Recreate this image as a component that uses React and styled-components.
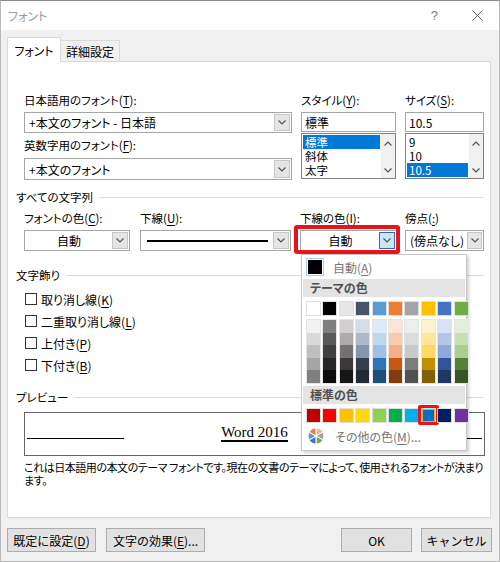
import styled, { createGlobalStyle } from "styled-components";

const GlobalStyle = createGlobalStyle`
  html, body {
    margin: 0;
    padding: 0;
    background: #fff;
  }
  body {
    font-family: "Noto Sans CJK JP", "Noto Sans", sans-serif;
    font-size: 11.5px;
    font-feature-settings: "palt";
    color: #000;
  }
  u {
    text-underline-offset: 2px;
  }
`;

const Window = styled.div`
  width: 500px;
  height: 562px;
  box-sizing: border-box;
  border: 1px solid #b9b9b9;
  border-top-color: #8c8c8c;
  background: #f0f0f0;
  display: flex;
  flex-direction: column;
  overflow: hidden;
`;

const TitleBar = styled.div`
  height: 29px;
  flex: none;
  background: #fff;
  display: flex;
  align-items: center;
  padding: 0 16px 0 7px;
  color: #9b9b9b;
  font-size: 12px;
`;

const TitleActions = styled.div`
  margin-left: auto;
  display: flex;
  align-items: center;
  gap: 34px;
  color: #777;
  font-family: "Liberation Sans", sans-serif;
  font-size: 13px;
`;

const Body = styled.div`
  flex: 1;
  padding: 0 7px 0 6px;
  display: flex;
  flex-direction: column;
`;

const TabStrip = styled.div`
  height: 32px;
  margin-bottom: -1px;
  display: flex;
  align-items: flex-end;
  position: relative;
  z-index: 1;
`;

const Tab = styled.div`
  box-sizing: border-box;
  width: ${(p) => (p.$active ? 54 : 60)}px;
  height: ${(p) => (p.$active ? 25 : 21)}px;
  margin-bottom: ${(p) => (p.$active ? 0 : 1)}px;
  margin-left: ${(p) => (p.$active ? 0 : -1)}px;
  display: flex;
  align-items: center;
  justify-content: center;
  border: 1px solid #d9d9d9;
  border-bottom: none;
  background: ${(p) => (p.$active ? "#fff" : "#f0f0f0")};
  font-size: 12px;
`;

const Panel = styled.div`
  box-sizing: border-box;
  width: 484px;
  height: 457px;
  background: #fff;
  border: 1px solid #d9d9d9;
  padding: 31px 6px 0 16px;
`;

const TopRow = styled.div`
  display: grid;
  grid-template-columns: 268px 95px 79px;
  column-gap: 9px;
`;

const Column = styled.div`
  display: flex;
  flex-direction: column;
`;

const Label = styled.div`
  height: 14px;
  line-height: 14px;
  white-space: nowrap;
  margin-top: ${(p) => p.$mt || 0}px;
  margin-bottom: ${(p) => (p.$mb === undefined ? 5 : p.$mb)}px;
`;

const Combo = styled.div`
  position: relative;
  box-sizing: border-box;
  height: ${(p) => p.$h || 21}px;
  border: 1px solid #a6a6a6;
  background: #fff;
  padding: 1px;
  display: flex;
`;

const ComboText = styled.div`
  flex: 1;
  display: flex;
  align-items: center;
  justify-content: ${(p) => (p.$center ? "center" : "flex-start")};
  padding: 0 ${(p) => p.$pad ?? 3}px;
  white-space: nowrap;
  font-size: 12px;
`;

const DropButton = styled.div`
  width: 16px;
  box-sizing: border-box;
  display: flex;
  align-items: center;
  justify-content: center;
  background: ${(p) => (p.$hot ? "#cce4f7" : "#e5e5e5")};
  border: 1px solid ${(p) => (p.$hot ? "#2f6ea8" : "#c6c6c6")};
`;

const UnderlineSample = styled.div`
  flex: 1;
  height: 2px;
  background: #000;
`;

const TextBox = styled.div`
  box-sizing: border-box;
  height: 20px;
  border: 1px solid #a6a6a6;
  display: flex;
  align-items: center;
  padding-left: 3px;
  font-size: 12px;
`;

const ListBox = styled.div`
  box-sizing: border-box;
  height: 46px;
  margin-top: 1px;
  border: 1px solid #828282;
  display: flex;
`;

const ListItems = styled.div`
  flex: 1;
  padding: 1px;
`;

const ListItem = styled.div`
  height: 14px;
  line-height: 14px;
  padding-left: 2px;
  font-size: 11.5px;
  background: ${(p) => (p.$sel ? "#0078d7" : "transparent")};
  color: ${(p) => (p.$sel ? "#fff" : "#000")};
`;

const ScrollBar = styled.div`
  width: 14px;
  background: #f0f0f0;
  display: flex;
  flex-direction: column;
  justify-content: space-between;
  align-items: center;
  padding: 7px 0 5px;
`;

const GroupTitle = styled.div`
  height: 14px;
  line-height: 14px;
  margin: ${(p) => p.$mt || 0}px 0 0 -8px;
  display: flex;
  align-items: center;
  white-space: nowrap;
  &::after {
    content: "";
    flex: 1;
    height: 1px;
    margin-left: 6px;
    background: #dcdcdc;
  }
`;

const FieldRow = styled.div`
  display: flex;
  margin-top: 7px;
`;

const Field = styled.div`
  width: ${(p) => p.$w}px;
  margin-left: ${(p) => p.$ml || 0}px;
  display: flex;
  flex-direction: column;
  position: relative;
`;

const Highlight = styled.span`
  position: absolute;
  top: -6px;
  left: -7px;
  right: -4px;
  bottom: -4px;
  border: 4px solid #e8141b;
  border-radius: 3px;
  pointer-events: none;
`;

const CheckList = styled.div`
  margin-top: 6px;
  display: flex;
  flex-direction: column;
`;

const CheckRow = styled.div`
  height: 22px;
  display: flex;
  align-items: center;
  padding-left: 1px;
  gap: 4px;
  font-size: 12px;
`;

const CheckBox = styled.span`
  width: 12px;
  height: 12px;
  box-sizing: border-box;
  border: 1px solid #333;
  background: #fff;
`;

const PreviewBox = styled.div`
  box-sizing: border-box;
  margin: 8px -1px 0 0;
  height: 44px;
  border: 1px solid #666;
  display: flex;
  justify-content: space-between;
  align-items: flex-end;
  padding: 0 2px 16px;
`;

const PreviewRule = styled.div`
  width: 97px;
  height: 1px;
  background: #000;
`;

const PreviewText = styled.span`
  font-family: "Liberation Serif", serif;
  font-size: 15px;
  line-height: 15px;
  border-bottom: 2px solid #000;
  margin-bottom: -3px;
`;

const Description = styled.p`
  margin: 5px 0 0;
  line-height: 13px;
  font-size: 11px;
  letter-spacing: -0.45px;
  white-space: nowrap;
`;

const Footer = styled.div`
  display: flex;
  padding-top: 10px;
`;

const Button = styled.button`
  box-sizing: border-box;
  width: ${(p) => p.$w}px;
  height: 24px;
  margin-left: ${(p) => p.$ml || 0};
  padding: 0;
  border: 1px solid #adadad;
  background: #e1e1e1;
  font-family: inherit;
  font-size: 12px;
  color: #000;
`;

/* colour drop-down */

const Popup = styled.div`
  position: absolute;
  left: 0;
  top: 23px;
  width: 166px;
  box-sizing: border-box;
  background: #fff;
  border: 1px solid #c8c8c8;
  box-shadow: 2px 2px 3px rgba(0, 0, 0, 0.18);
  padding: 0 1px 2px;
  z-index: 5;
`;

const MenuRow = styled.div`
  height: 24px;
  margin-top: ${(p) => p.$mt || 0}px;
  display: flex;
  align-items: center;
  padding-left: 5px;
  color: #777;
  font-size: 12px;
  gap: 11px;
`;

const AutoSwatch = styled.span`
  width: 14px;
  height: 14px;
  background: #000;
  box-shadow: 0 0 0 1px #fff, 0 0 0 2px #a9cdee;
`;

const MenuHeader = styled.div`
  height: 18px;
  line-height: 18px;
  margin-top: ${(p) => p.$mt || 0}px;
  padding-left: 7px;
  background: #e4e4e4;
  color: #505050;
  font-weight: bold;
  font-size: 12px;
`;

const SwatchGrid = styled.div`
  display: grid;
  grid-template-columns: repeat(10, 13px);
  column-gap: 3.4px;
  padding-left: 4px;
  margin-top: 5px;
`;

const Swatch = styled.span`
  position: relative;
  width: 13px;
  height: 13px;
  box-sizing: border-box;
  background: ${(p) => p.$c};
  box-shadow: 0 0 0 1px #dedede;
  border: ${(p) => (p.$picked ? "1px solid #f2a33a" : "none")};
`;

const ShadeColumn = styled.div`
  height: 63px;
  display: flex;
  flex-direction: column;
  box-shadow: 0 0 0 1px #e4e4e4;
`;

const Shade = styled.span`
  flex: 1;
  background: ${(p) => p.$c};
`;

const PickMark = styled.span`
  position: absolute;
  top: -5px;
  left: -5px;
  right: -5px;
  bottom: -4px;
  border: 3px solid #e8141b;
  border-radius: 2px;
`;

const theme = [
  ["#ffffff", ["#f2f2f2", "#d9d9d9", "#bfbfbf", "#a6a6a6", "#808080"]],
  ["#000000", ["#7f7f7f", "#595959", "#404040", "#262626", "#0d0d0d"]],
  ["#e7e6e6", ["#d0cece", "#aeaaaa", "#757171", "#3a3838", "#171616"]],
  ["#44546a", ["#d6dce4", "#adb9ca", "#8497b0", "#333f4f", "#222b35"]],
  ["#5b9bd5", ["#ddebf7", "#bdd7ee", "#9bc2e6", "#2f75b5", "#1f4e78"]],
  ["#ed7d31", ["#fce4d6", "#f8cbad", "#f4b084", "#c65911", "#833c0c"]],
  ["#a5a5a5", ["#ededed", "#dbdbdb", "#c9c9c9", "#7b7b7b", "#525252"]],
  ["#ffc000", ["#fff2cc", "#ffe699", "#ffd966", "#bf8f00", "#806000"]],
  ["#4472c4", ["#d9e1f2", "#b4c6e7", "#8ea9db", "#305496", "#203764"]],
  ["#70ad47", ["#e2efda", "#c6e0b4", "#a9d08e", "#548235", "#375623"]],
];

const standard = [
  "#c00000", "#ff0000", "#ffc000", "#ffd800", "#92d050",
  "#00b050", "#00b0f0", "#0070c0", "#002060", "#7030a0",
];

function Chevron({ up }) {
  return (
    <svg width="8" height="5" viewBox="0 0 8 5">
      <polyline
        points={up ? "0.5,4.5 4,1 7.5,4.5" : "0.5,0.5 4,4 7.5,0.5"}
        fill="none"
        stroke="#555"
        strokeWidth="1.2"
      />
    </svg>
  );
}

function ColorWheel() {
  const colors = ["#f4b183", "#a5a5a5", "#70ad47", "#4472c4", "#5b9bd5", "#e8823c"];
  const r = 8;
  const slices = colors.map((c, i) => {
    const a0 = ((i * 60 - 90) * Math.PI) / 180;
    const a1 = (((i + 1) * 60 - 90) * Math.PI) / 180;
    const x0 = 8 + r * Math.cos(a0);
    const y0 = 8 + r * Math.sin(a0);
    const x1 = 8 + r * Math.cos(a1);
    const y1 = 8 + r * Math.sin(a1);
    return (
      <path
        key={c}
        d={`M8 8 L${x0.toFixed(2)} ${y0.toFixed(2)} A${r} ${r} 0 0 1 ${x1.toFixed(2)} ${y1.toFixed(2)} Z`}
        fill={c}
        stroke="#fff"
        strokeWidth="1"
      />
    );
  });
  return (
    <svg width="16" height="16" viewBox="0 0 16 16">
      {slices}
    </svg>
  );
}

function CloseIcon() {
  return (
    <svg width="11" height="11" viewBox="0 0 11 11">
      <path d="M0.5 0.5 L10.5 10.5 M10.5 0.5 L0.5 10.5" stroke="#666" strokeWidth="1" />
    </svg>
  );
}

function ColorMenu() {
  return (
    <Popup>
      <MenuRow>
        <AutoSwatch />
        <span>
          自動(<u>A</u>)
        </span>
      </MenuRow>
      <MenuHeader>テーマの色</MenuHeader>
      <SwatchGrid>
        {theme.map(([c]) => (
          <Swatch key={c} $c={c} />
        ))}
      </SwatchGrid>
      <SwatchGrid>
        {theme.map(([c, shades]) => (
          <ShadeColumn key={c}>
            {shades.map((s) => (
              <Shade key={s} $c={s} />
            ))}
          </ShadeColumn>
        ))}
      </SwatchGrid>
      <MenuHeader $mt={3}>標準の色</MenuHeader>
      <SwatchGrid>
        {standard.map((c) => (
          <Swatch key={c} $c={c} $picked={c === "#0070c0"}>
            {c === "#0070c0" && <PickMark />}
          </Swatch>
        ))}
      </SwatchGrid>
      <MenuRow $mt={2}>
        <ColorWheel />
        <span>
          その他の色(<u>M</u>)...
        </span>
      </MenuRow>
    </Popup>
  );
}

export default function App() {
  return (
    <>
      <GlobalStyle />
      <Window>
        <TitleBar>
          フォント
          <TitleActions>
            <span>?</span>
            <CloseIcon />
          </TitleActions>
        </TitleBar>
        <Body>
          <TabStrip>
            <Tab $active>フォント</Tab>
            <Tab>詳細設定</Tab>
          </TabStrip>
          <Panel>
            <TopRow>
              <Column>
                <Label>
                  日本語用のフォント(<u>T</u>):
                </Label>
                <Combo $h={21}>
                  <ComboText>+本文のフォント - 日本語</ComboText>
                  <DropButton>
                    <Chevron />
                  </DropButton>
                </Combo>
                <Label $mt={5} $mb={6}>
                  英数字用のフォント(<u>F</u>):
                </Label>
                <Combo $h={22}>
                  <ComboText>+本文のフォント</ComboText>
                  <DropButton>
                    <Chevron />
                  </DropButton>
                </Combo>
              </Column>
              <Column>
                <Label>
                  スタイル(<u>Y</u>):
                </Label>
                <TextBox>標準</TextBox>
                <ListBox>
                  <ListItems>
                    <ListItem $sel>標準</ListItem>
                    <ListItem>斜体</ListItem>
                    <ListItem>太字</ListItem>
                  </ListItems>
                  <ScrollBar>
                    <Chevron up />
                    <Chevron />
                  </ScrollBar>
                </ListBox>
              </Column>
              <Column>
                <Label>
                  サイズ(<u>S</u>):
                </Label>
                <TextBox>10.5</TextBox>
                <ListBox>
                  <ListItems>
                    <ListItem>9</ListItem>
                    <ListItem>10</ListItem>
                    <ListItem $sel>10.5</ListItem>
                  </ListItems>
                  <ScrollBar>
                    <Chevron up />
                    <Chevron />
                  </ScrollBar>
                </ListBox>
              </Column>
            </TopRow>

            <GroupTitle $mt={10}>すべての文字列</GroupTitle>
            <FieldRow>
              <Field $w={106}>
                <Label>
                  フォントの色(<u>C</u>):
                </Label>
                <Combo>
                  <ComboText $center>自動</ComboText>
                  <DropButton>
                    <Chevron />
                  </DropButton>
                </Combo>
              </Field>
              <Field $w={151} $ml={10}>
                <Label>
                  下線(<u>U</u>):
                </Label>
                <Combo>
                  <ComboText $pad={5}>
                    <UnderlineSample />
                  </ComboText>
                  <DropButton>
                    <Chevron />
                  </DropButton>
                </Combo>
              </Field>
              <Field $w={97} $ml={9}>
                <Label>
                  下線の色(<u>I</u>):
                </Label>
                <Combo>
                  <ComboText $center>自動</ComboText>
                  <DropButton $hot>
                    <Chevron />
                  </DropButton>
                  <Highlight />
                  <ColorMenu />
                </Combo>
              </Field>
              <Field $w={79} $ml={8}>
                <Label>
                  傍点(<u>:</u>)
                </Label>
                <Combo>
                  <ComboText>(傍点なし)</ComboText>
                  <DropButton>
                    <Chevron />
                  </DropButton>
                </Combo>
              </Field>
            </FieldRow>

            <GroupTitle $mt={17}>文字飾り</GroupTitle>
            <CheckList>
              <CheckRow>
                <CheckBox />
                <span>
                  取り消し線(<u>K</u>)
                </span>
              </CheckRow>
              <CheckRow>
                <CheckBox />
                <span>
                  二重取り消し線(<u>L</u>)
                </span>
              </CheckRow>
              <CheckRow>
                <CheckBox />
                <span>
                  上付き(<u>P</u>)
                </span>
              </CheckRow>
              <CheckRow>
                <CheckBox />
                <span>
                  下付き(<u>B</u>)
                </span>
              </CheckRow>
            </CheckList>

            <GroupTitle $mt={14}>プレビュー</GroupTitle>
            <PreviewBox>
              <PreviewRule />
              <PreviewText>Word 2016</PreviewText>
              <PreviewRule />
            </PreviewBox>
            <Description>
              これは日本語用の本文のテーマ フォントです。現在の文書のテーマによって、使用されるフォントが決まり
              <br />
              ます。
            </Description>
          </Panel>
          <Footer>
            <Button $w={89}>
              既定に設定(<u>D</u>)
            </Button>
            <Button $w={99} $ml="10px">
              文字の効果(<u>E</u>)...
            </Button>
            <Button $w={71} $ml="auto">
              OK
            </Button>
            <Button $w={71} $ml="9px">
              キャンセル
            </Button>
          </Footer>
        </Body>
      </Window>
    </>
  );
}
